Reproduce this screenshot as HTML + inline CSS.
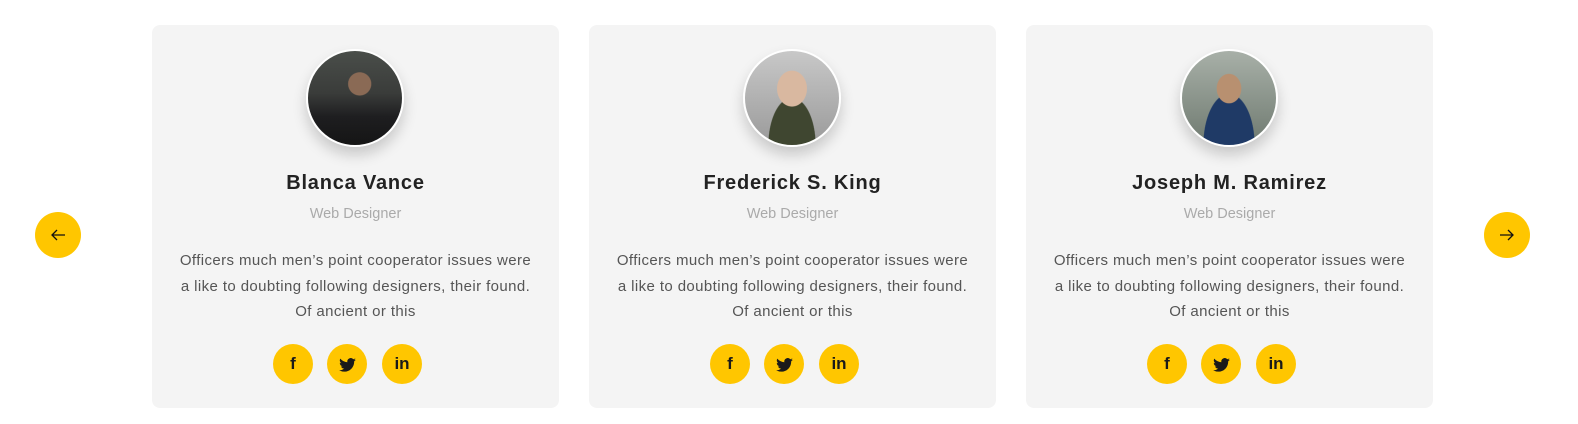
<!DOCTYPE html>
<html><head><style>
body{margin:0;width:1578px;height:424px;background:#fff;font-family:"Liberation Sans",sans-serif;position:relative;overflow:hidden}
.card{position:absolute;top:25px;width:407px;height:383px;background:#f4f4f4;border-radius:8px;text-align:center}
.av{position:absolute;left:154px;top:24px;width:94px;height:94px;border-radius:50%;border:2px solid #fff;box-shadow:0 8px 14px rgba(0,0,0,.18);overflow:hidden}
.name{position:absolute;top:147px;left:0;right:0;font-size:20px;font-weight:bold;color:#222;letter-spacing:0.8px}
.role{position:absolute;top:181px;left:0;right:0;font-size:14.5px;color:#aaa}
.txt{position:absolute;top:223px;left:0;right:0;font-size:15px;line-height:25.5px;color:#555;white-space:nowrap;letter-spacing:0.4px}
.soc{position:absolute;top:319px;width:40px;height:40px;border-radius:50%;background:#ffc600;color:#1a1a1a;font-weight:bold;font-size:17px;line-height:40px}
.arr{position:absolute;top:212px;width:46px;height:46px;border-radius:50%;background:#ffc600;text-align:center}
.arr svg{margin-top:16px}
</style></head><body>
<div class="arr" style="left:35px"><svg width="16" height="14" viewBox="0 0 16 14"><path d="M15 7H2M7 2L2 7l5 5" stroke="#111" stroke-width="1.3" fill="none"/></svg></div>
<div class="arr" style="left:1484px"><svg width="16" height="14" viewBox="0 0 16 14"><path d="M1 7h13M9 2l5 5-5 5" stroke="#111" stroke-width="1.3" fill="none"/></svg></div>

<div class="card" style="left:152px">
<div class="av" style="background:radial-gradient(circle at 55% 35%,#8a6a55 0 14%,transparent 15%),linear-gradient(180deg,#4a4e4a 0,#3a3c3a 45%,#1e1e20 70%,#151515 100%)"></div>
<div class="name">Blanca Vance</div><div class="role">Web Designer</div>
<div class="txt">Officers much men’s point cooperator issues were<br>a like to doubting following designers, their found.<br>Of ancient or this</div>
<div class="soc" style="left:121px">f</div><div class="soc" style="left:175px"><svg width="17" height="14" viewBox="0 0 24 20" style="vertical-align:middle"><path fill="#1a1a1a" d="M24 2.4a10 10 0 0 1-2.8.8A5 5 0 0 0 23.3.5a10 10 0 0 1-3.1 1.2A4.9 4.9 0 0 0 11.8 6 14 14 0 0 1 1.700.9a4.9 4.9 0 0 0 1.5 6.6A4.9 4.9 0 0 1 1 6.9a4.9 4.9 0 0 0 3.9 4.8 5 5 0 0 1-2.2.1 4.9 4.9 0 0 0 4.6 3.4A9.9 9.9 0 0 1 0 17.3 14 14 0 0 0 7.5 19.5c9.1 0 14-7.5 14-14v-.6A10 10 0 0 0 24 2.4z"/></svg></div><div class="soc" style="left:230px">in</div>
</div>

<div class="card" style="left:589px">
<div class="av" style="background:radial-gradient(ellipse at 50% 40%,#d9b8a0 0 22%,transparent 23%),radial-gradient(ellipse at 50% 100%,#3f4630 0 35%,transparent 36%),linear-gradient(#c8c8c8,#9a9a9a)"></div>
<div class="name">Frederick S. King</div><div class="role">Web Designer</div>
<div class="txt">Officers much men’s point cooperator issues were<br>a like to doubting following designers, their found.<br>Of ancient or this</div>
<div class="soc" style="left:121px">f</div><div class="soc" style="left:175px"><svg width="17" height="14" viewBox="0 0 24 20" style="vertical-align:middle"><path fill="#1a1a1a" d="M24 2.4a10 10 0 0 1-2.8.8A5 5 0 0 0 23.3.5a10 10 0 0 1-3.1 1.2A4.9 4.9 0 0 0 11.8 6 14 14 0 0 1 1.700.9a4.9 4.9 0 0 0 1.5 6.6A4.9 4.9 0 0 1 1 6.9a4.9 4.9 0 0 0 3.9 4.8 5 5 0 0 1-2.2.1 4.9 4.9 0 0 0 4.6 3.4A9.9 9.9 0 0 1 0 17.3 14 14 0 0 0 7.5 19.5c9.1 0 14-7.5 14-14v-.6A10 10 0 0 0 24 2.4z"/></svg></div><div class="soc" style="left:230px">in</div>
</div>

<div class="card" style="left:1026px">
<div class="av" style="background:radial-gradient(ellipse at 50% 40%,#b89070 0 18%,transparent 19%),radial-gradient(ellipse at 50% 100%,#1f3a66 0 38%,transparent 39%),linear-gradient(#a8b0a8,#6f7a70)"></div>
<div class="name">Joseph M. Ramirez</div><div class="role">Web Designer</div>
<div class="txt">Officers much men’s point cooperator issues were<br>a like to doubting following designers, their found.<br>Of ancient or this</div>
<div class="soc" style="left:121px">f</div><div class="soc" style="left:175px"><svg width="17" height="14" viewBox="0 0 24 20" style="vertical-align:middle"><path fill="#1a1a1a" d="M24 2.4a10 10 0 0 1-2.8.8A5 5 0 0 0 23.3.5a10 10 0 0 1-3.1 1.2A4.9 4.9 0 0 0 11.8 6 14 14 0 0 1 1.700.9a4.9 4.9 0 0 0 1.5 6.6A4.9 4.9 0 0 1 1 6.9a4.9 4.9 0 0 0 3.9 4.8 5 5 0 0 1-2.2.1 4.9 4.9 0 0 0 4.6 3.4A9.9 9.9 0 0 1 0 17.3 14 14 0 0 0 7.5 19.5c9.1 0 14-7.5 14-14v-.6A10 10 0 0 0 24 2.4z"/></svg></div><div class="soc" style="left:230px">in</div>
</div>
</body></html>
